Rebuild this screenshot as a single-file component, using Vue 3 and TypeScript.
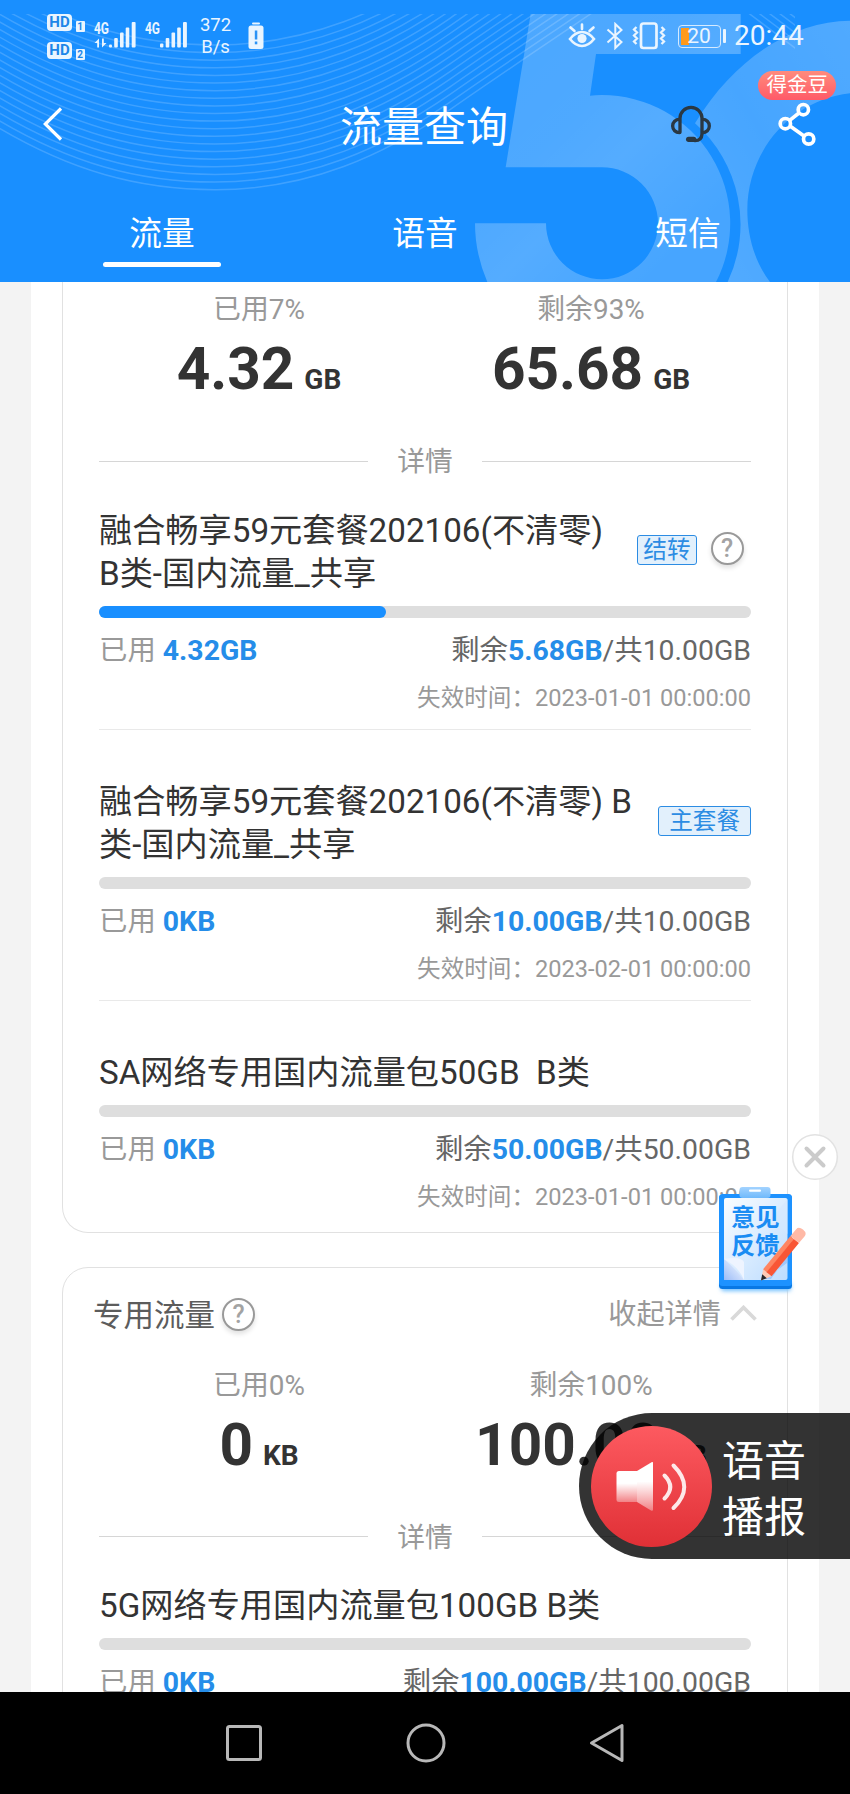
<script setup lang="ts">
interface Plan {
  title: string
  tag?: string
  help?: boolean
  percent: number
  used: string
  left: string
  total: string
  expire: string
}
interface Stat {
  label: string
  value: string
  unit: string
}
interface Group {
  name?: string
  stats: Stat[]
  plans: Plan[]
}

const tabs: string[] = ['流量', '语音', '短信']
const activeTab = 0

const groups: Group[] = [
  {
    stats: [
      { label: '已用7%', value: '4.32', unit: 'GB' },
      { label: '剩余93%', value: '65.68', unit: 'GB' },
    ],
    plans: [
      {
        title: '融合畅享59元套餐202106(不清零)\nB类-国内流量_共享',
        tag: '结转',
        help: true,
        percent: 44,
        used: '4.32GB',
        left: '5.68GB',
        total: '10.00GB',
        expire: '2023-01-01 00:00:00',
      },
      {
        title: '融合畅享59元套餐202106(不清零) B\n类-国内流量_共享',
        tag: '主套餐',
        percent: 0,
        used: '0KB',
        left: '10.00GB',
        total: '10.00GB',
        expire: '2023-02-01 00:00:00',
      },
      {
        title: 'SA网络专用国内流量包50GB  B类',
        percent: 0,
        used: '0KB',
        left: '50.00GB',
        total: '50.00GB',
        expire: '2023-01-01 00:00:00',
      },
    ],
  },
  {
    name: '专用流量',
    stats: [
      { label: '已用0%', value: '0', unit: 'KB' },
      { label: '剩余100%', value: '100.00', unit: 'GB' },
    ],
    plans: [
      {
        title: '5G网络专用国内流量包100GB B类',
        percent: 0,
        used: '0KB',
        left: '100.00GB',
        total: '100.00GB',
        expire: '2023-01-01 00:00:00',
      },
    ],
  },
]

const waves: number[] = Array.from({ length: 20 }, (_, i) => 189.7 - i * 7.62)
</script>

<template>
  <div class="phone">
    <header class="header">
      <svg class="header-art" width="850" height="282" viewBox="0 0 850 282">
        <defs>
          <clipPath id="waveClip"><rect x="0" y="14" width="795" height="268" /></clipPath>
          <linearGradient id="five" gradientUnits="userSpaceOnUse" x1="250" y1="150" x2="800" y2="700">
            <stop offset="0" stop-color="#fff" stop-opacity=".22" />
            <stop offset=".35" stop-color="#fff" stop-opacity=".23" />
            <stop offset=".6" stop-color="#fff" stop-opacity=".26" />
            <stop offset="1" stop-color="#fff" stop-opacity=".2" />
          </linearGradient>
          <linearGradient id="gee" x1="1" y1="0" x2="0" y2="1">
            <stop offset="0" stop-color="#fff" stop-opacity=".24" />
            <stop offset=".5" stop-color="#fff" stop-opacity=".2" />
            <stop offset="1" stop-color="#fff" stop-opacity=".26" />
          </linearGradient>
        </defs>
        <g clip-path="url(#waveClip)" fill="none" stroke="#fff" stroke-opacity=".17" stroke-width="1.5">
          <path
            v-for="y in waves"
            :key="y"
            :transform="`translate(0 ${y})`"
            d="M-10 -67C70 -18 140 0 215 0C310 0 385 -35 450 -80C500 -115 560 -155 591 -176C640 -210 700 -215 740 -183L800 -138"
          />
        </g>
        <g transform="translate(425 0) scale(.33333)">
          <path
            fill="url(#five)"
            d="M317 42H947V162H513L495 287Q512 285 530 285A385 385 0 0 1 873 846H187Q150 760 150 670H363A168 168 0 1 0 530 502H242Z"
          />
          <path
            fill="url(#gee)"
            d="M1275 62C1110 62 930 170 810 370A405 405 0 0 1 908 846H1035C985 780 967 700 967 630C967 450 1100 300 1275 280Z"
          />
        </g>
      </svg>

      <div class="status">
        <div class="status-left">
          <div class="hd-stack">
            <div v-for="n in 2" :key="n" class="hd">
              <span class="hd-box">HD</span><span class="hd-num">{{ n }}</span>
            </div>
          </div>
          <svg class="signal" width="44" height="30" viewBox="0 0 44 30" fill="#eaf5ff">
            <text x="0" y="14.500" class="g4" textLength="15" lengthAdjust="spacingAndGlyphs">4G</text>
            <path d="M0.500 24l4.500-4.500V28.500H3.200v-4.500zM12.500 24l-4.500 4.500V19.500h1.800v4.500z" />
            <rect x="15" y="25.500" width="3" height="3" rx="1" />
            <rect x="20.200" y="19" width="3.600" height="9.500" rx="1" />
            <rect x="26" y="13.500" width="3.600" height="15" rx="1" />
            <rect x="31.700" y="8.500" width="3.600" height="20" rx="1" />
            <rect x="37.700" y="3" width="3.900" height="25.500" rx="1" />
          </svg>
          <svg class="signal second" width="44" height="30" viewBox="0 0 44 30" fill="#eaf5ff">
            <text x="0" y="14.500" class="g4" textLength="15" lengthAdjust="spacingAndGlyphs">4G</text>
            <rect x="15" y="24.500" width="3.400" height="4" rx="1" />
            <rect x="20.700" y="19" width="3.600" height="9.500" rx="1" />
            <rect x="26.500" y="13.500" width="3.600" height="15" rx="1" />
            <rect x="32.200" y="8.500" width="3.600" height="20" rx="1" />
            <rect x="38" y="3" width="3.900" height="25.500" rx="1" />
          </svg>
          <div class="speed"><span>372</span><span>B/s</span></div>
          <svg class="alert" width="16" height="28" viewBox="0 0 16 28">
            <rect x="4" y="0.500" width="8" height="2" rx="1" fill="#eaf5ff" />
            <rect x="0.500" y="3.500" width="15" height="23.500" rx="2.500" fill="#eaf5ff" />
            <rect x="6.800" y="8.500" width="2.500" height="9" fill="#2b93f5" />
            <rect x="6.800" y="19.500" width="2.500" height="2.800" fill="#2b93f5" />
          </svg>
        </div>
        <div class="status-right">
          <svg width="28" height="26" viewBox="0 0 28 26" fill="none" stroke="#eaf5ff" stroke-width="2.600" stroke-linecap="round">
            <path d="M2 16Q7.500 9 14 9T26 16Q20.500 23 14 23T2 16Z" />
            <path d="M14 6V1.500M6.500 8L2.500 4.500M21.500 8l4-3.500" />
            <circle cx="14" cy="15.500" r="4.600" fill="#eaf5ff" stroke="none" />
          </svg>
          <svg class="bt" width="18" height="28" viewBox="0 0 18 28" fill="none" stroke="#eaf5ff" stroke-width="2">
            <path d="M1.500 7.500L15.500 20L9.300 26V2L15.500 8L1.500 20.500" />
          </svg>
          <svg class="vib" width="34" height="28" viewBox="0 0 34 28" fill="none" stroke="#eaf5ff">
            <rect x="9" y="1.500" width="15.500" height="24.500" rx="2.500" stroke-width="2.700" />
            <path d="M4.500 5L2 7.500L5 10.500L2 13.500L5 16.500L2 19.500L4.500 22M29.500 5L32 7.500L29 10.500L32 13.500L29 16.500L32 19.500L29.500 22" stroke-width="2.300" />
          </svg>
          <div class="battery"><span>20</span></div>
          <i class="nub"></i>
          <span class="clock">20:44</span>
        </div>
      </div>

      <div class="titlebar">
        <svg class="back" width="24" height="38" viewBox="0 0 24 38" fill="none" stroke="#fff" stroke-width="3.200">
          <path d="M20 3.500L4.300 19L20 34.500" />
        </svg>
        <h1>流量查询</h1>
        <div class="actions">
          <svg width="43.330" height="43.330" viewBox="734 309 130 130" fill="none" stroke="#2a3843" stroke-width="10" stroke-linecap="round">
            <path d="M767 400V358A33 33 0 0 1 833 358V405Q832 425 812 425" />
            <path d="M793 421H808" stroke-width="16" />
            <path d="M765 361A20 20 0 0 0 765 401M835 361A20 20 0 0 1 835 401" />
          </svg>
          <div class="share">
            <svg width="43.330" height="46.670" viewBox="1052 302 130 140" fill="none" stroke="#fff" stroke-width="11">
              <path d="M1093 360L1121 338M1095 378L1135 406" />
              <circle cx="1134" cy="328" r="15.500" />
              <circle cx="1080" cy="370" r="15.500" />
              <circle cx="1150" cy="416" r="15.500" />
            </svg>
            <span class="bean">得金豆</span>
          </div>
        </div>
      </div>

      <nav class="tabs">
        <div v-for="(t, i) in tabs" :key="t" class="tab" :class="{ active: i === activeTab }">{{ t }}</div>
      </nav>
    </header>

    <main class="content">
      <div class="sheet">
        <section v-for="(g, gi) in groups" :key="gi" class="card" :class="{ open: !g.name }">
          <div v-if="g.name" class="card-head">
            <span class="card-name">{{ g.name }}</span>
            <span class="help">?</span>
            <span class="fold">收起详情</span>
            <svg class="chev" width="27" height="16" viewBox="0 0 27 16" fill="none" stroke="#d9d9d9" stroke-width="3.700">
              <path d="M1.500 14.500L13.500 2.500L25.500 14.500" />
            </svg>
          </div>
          <div class="stats">
            <div v-for="s in g.stats" :key="s.label" class="stat">
              <div class="stat-label">{{ s.label }}</div>
              <div class="stat-value">{{ s.value }}<small>{{ s.unit }}</small></div>
            </div>
          </div>
          <div class="divider"><span>详情</span></div>
          <div class="plans">
            <article v-for="p in g.plans" :key="p.title" class="plan">
              <div class="plan-top">
                <h2>{{ p.title }}</h2>
                <div v-if="p.tag" class="marks">
                  <span class="tag" :class="{ narrow: p.help }">{{ p.tag }}</span>
                  <span v-if="p.help" class="help">?</span>
                </div>
              </div>
              <div class="bar"><i :style="{ width: p.percent + '%' }"></i></div>
              <div class="usage">
                <span class="used">已用 <b>{{ p.used }}</b></span>
                <span>剩余<b>{{ p.left }}</b>/共{{ p.total }}</span>
              </div>
              <div class="expire">失效时间：{{ p.expire }}</div>
            </article>
          </div>
        </section>
      </div>
    </main>

    <footer class="navbar">
      <svg width="38" height="40" viewBox="0 0 38 40" fill="none" stroke="#b8b8b8" stroke-width="3">
        <rect x="2.500" y="3.500" width="33" height="33" rx="2" />
      </svg>
      <svg width="40" height="40" viewBox="0 0 40 40" fill="none" stroke="#b8b8b8" stroke-width="3">
        <circle cx="20" cy="20" r="18" />
      </svg>
      <svg width="38" height="40" viewBox="0 0 38 40" fill="none" stroke="#b8b8b8" stroke-width="3" stroke-linejoin="round">
        <path d="M3.500 20L34 2.500V37.500Z" />
      </svg>
    </footer>

    <svg class="close" width="48" height="48" viewBox="0 0 48 48">
      <circle cx="24" cy="24" r="22.300" fill="#fff" stroke="#e2e2e2" stroke-width="1.500" />
      <path d="M15.500 15.500L32.500 32.500M32.500 15.500L15.500 32.500" stroke="#cbcbcb" stroke-width="4" stroke-linecap="round" />
    </svg>

    <div class="feedback">
      <svg width="92" height="112" viewBox="0 0 92 112">
        <defs>
          <linearGradient id="paper" x1="0" y1="0" x2="1" y2="1">
            <stop offset="0" stop-color="#fafdff" />
            <stop offset="1" stop-color="#bcdcff" />
          </linearGradient>
          <linearGradient id="clip" x1="0" y1="0" x2="0" y2="1">
            <stop offset="0" stop-color="#a3d3ff" />
            <stop offset="1" stop-color="#6fb9fb" />
          </linearGradient>
          <linearGradient id="curl" x1="1" y1="0" x2="0" y2="1">
            <stop offset="0" stop-color="#fff" />
            <stop offset="1" stop-color="#9bbcf8" />
          </linearGradient>
          <filter id="soft" x="-20%" y="-100%" width="140%" height="300%"><feGaussianBlur stdDeviation="2" /></filter>
        </defs>
        <rect x="6" y="98" width="70" height="9" rx="3" fill="#6fc0ff" filter="url(#soft)" />
        <rect x="4" y="11" width="73" height="94" rx="3.500" fill="#0878e4" />
        <rect x="4" y="10" width="73" height="92" rx="3.500" fill="#1d92ff" />
        <rect x="9" y="14" width="63.500" height="82" rx="2" fill="url(#paper)" />
        <path d="M72.500 15L56 35L72.500 50Z" fill="#d4e7ff" opacity=".6" />
        <path d="M9 75Q20 84 29 96H9Z" fill="url(#curl)" />
        <path d="M9 75Q26 72 29 78V96Q24 83 9 75Z" fill="#eef4ff" />
        <rect x="24.500" y="3" width="31" height="11" rx="3" fill="url(#clip)" />
        <rect x="34" y="5.500" width="12" height="2.200" rx="1" fill="#fff" />
      </svg>
      <span class="feedback-text">意见<br />反馈</span>
      <svg class="pencil" width="92" height="112" viewBox="0 0 92 112">
        <path d="M50 95L72 79L72.500 72L56 95Z" fill="#85b8fb" opacity=".6" />
        <g transform="translate(46 96.500) rotate(-50.500)">
          <path d="M0 0L10 -5.500V5.500Z" fill="#ffc9b5" />
          <path d="M0 0L5.500 -3V3Z" fill="#26262b" />
          <rect x="10" y="-5.500" width="43" height="5" fill="#ff8562" />
          <rect x="10" y="-1" width="43" height="6.500" fill="#f95635" />
          <path d="M53 -5.500H62Q66 -5.500 66 0T62 5.500H53Z" fill="#ffb9a6" />
        </g>
      </svg>
    </div>

    <div class="voice">
      <svg width="121" height="121" viewBox="0 0 121 121">
        <defs>
          <linearGradient id="red" x1="0" y1="0" x2="0" y2="1">
            <stop offset="0" stop-color="#fd5a60" />
            <stop offset="1" stop-color="#e03036" />
          </linearGradient>
          <linearGradient id="horn" x1="0" y1="0" x2="0" y2="1">
            <stop offset=".4" stop-color="#fff" />
            <stop offset="1" stop-color="#fff" stop-opacity=".35" />
          </linearGradient>
        </defs>
        <circle cx="60.500" cy="60.500" r="60.500" fill="url(#red)" />
        <path d="M28 45H46V76H28Q25.500 76 25.500 73.500V47.500Q25.500 45 28 45Z" fill="url(#horn)" />
        <path d="M46 45L61 36Q62 35.500 62 37V83.500Q62 85.500 60 84.500L46 76Z" fill="url(#horn)" />
        <path d="M73.500 49.500Q85 61 73.500 72.500M82.500 39.500Q104 61 82.500 82" fill="none" stroke="#fff" stroke-opacity=".88" stroke-width="4" stroke-linecap="round" />
      </svg>
      <span class="voice-text">语音<br />播报</span>
    </div>
  </div>
</template>

<style>
body {
  margin: 0;
  background: #f3f3f3;
}
</style>

<style scoped>
.phone {
  position: relative;
  display: flex;
  flex-direction: column;
  width: 850px;
  height: 1794px;
  overflow: hidden;
  background: #f3f3f3;
  color: #333;
  font-family: Roboto, 'Noto Sans CJK SC', sans-serif;
}
svg {
  display: block;
  flex: none;
}

/* header */
.header {
  position: relative;
  flex: none;
  height: 282px;
  background: #198fff;
  color: #fff;
}
.header-art {
  position: absolute;
  left: 0;
  top: 0;
}
.status {
  position: relative;
  display: flex;
  justify-content: space-between;
  height: 70px;
  box-sizing: border-box;
  padding: 0 46px 0 47px;
  color: #eaf5ff;
}
.status-left {
  display: flex;
  align-items: flex-start;
}
.hd-stack {
  display: flex;
  flex-direction: column;
  gap: 11.500px;
  padding-top: 13.500px;
}
.hd {
  display: flex;
  align-items: flex-end;
  gap: 3.500px;
  height: 17px;
}
.hd-box {
  width: 25px;
  height: 17px;
  border-radius: 4px;
  background: #eaf5ff;
  color: #1d86e8;
  font: 700 15px/17px Roboto, sans-serif;
  text-align: center;
}
.hd-num {
  width: 9px;
  height: 11px;
  border-radius: 1px;
  background: #eaf5ff;
  color: #1d86e8;
  font: 700 10px/11px Roboto, sans-serif;
  text-align: center;
  position: relative;
  top: 1px;
}
.signal {
  margin: 19px 0 0 9px;
}
.signal.second {
  margin-left: 7.500px;
}
.g4 {
  font: 700 16px Roboto, sans-serif;
}
.speed {
  display: flex;
  flex-direction: column;
  width: 36px;
  margin: 14px 0 0 8.500px;
  font-size: 18.500px;
  line-height: 22px;
  text-align: center;
}
.alert {
  margin: 22px 0 0 14.500px;
}
.status-right {
  display: flex;
  align-items: center;
  height: 72px;
}
.bt {
  margin-left: 10px;
}
.vib {
  margin-left: 8px;
}
.battery {
  position: relative;
  width: 43px;
  height: 23px;
  margin-left: 11.500px;
  box-sizing: border-box;
  border: 1.500px solid #d5eaff;
  border-radius: 4px;
  font-size: 21px;
  line-height: 20px;
  text-align: center;
  background: linear-gradient(#ff9a1c, #ff9a1c) 2px 2px / 8px 17px no-repeat;
}
.nub {
  width: 3px;
  height: 14px;
  margin-left: 2px;
  border-radius: 1px;
  background: #eaf5ff;
}
.clock {
  width: 70px;
  margin-left: 8.500px;
  font-size: 28px;
  line-height: 36px;
  white-space: nowrap;
}
.titlebar {
  position: relative;
  display: grid;
  grid-template-columns: 1fr auto 1fr;
  align-items: center;
  height: 108px;
}
.back {
  margin-left: 41px;
}
h1 {
  margin: 7px 2px 0 0;
  font-size: 42px;
  line-height: 60px;
  font-weight: 400;
}
.actions {
  display: flex;
  justify-content: flex-end;
  align-items: center;
  gap: 63px;
  padding-right: 31px;
}
.share {
  position: relative;
}
.bean {
  position: absolute;
  left: -17.500px;
  top: -29.500px;
  width: 78px;
  height: 28.500px;
  border-radius: 15px;
  background: linear-gradient(#ff8b7c, #ff5a68);
  font-size: 20.500px;
  line-height: 29px;
  text-align: center;
  white-space: nowrap;
}
.tabs {
  position: relative;
  display: flex;
  justify-content: center;
  height: 104px;
}
.tab {
  display: flex;
  flex-direction: column;
  align-items: center;
  width: 263px;
  padding-top: 33px;
  font-size: 32.700px;
  line-height: 46px;
}
.tab.active::after {
  content: '';
  width: 118px;
  height: 5px;
  margin-top: 5px;
  border-radius: 3px;
  background: #fff;
}

/* content */
.content {
  flex: 1;
  min-height: 0;
  overflow: hidden;
  display: flex;
  justify-content: center;
}
.sheet {
  width: 788px;
  min-height: 100%;
  box-sizing: border-box;
  padding: 0 31px;
  background: #fff;
}
.card {
  box-sizing: border-box;
  border: 1.500px solid #e1e1e1;
  border-radius: 26px;
  margin-bottom: 34px;
}
.card.open {
  border-top: 0;
  border-radius: 0 0 26px 26px;
}
.card-head {
  display: flex;
  align-items: center;
  height: 90px;
  padding: 0 30px;
}
.card-name {
  font-size: 30.500px;
  line-height: 44px;
  color: #5c5c5c;
  margin-top: 7px;
}
.help {
  width: 33px;
  height: 33px;
  box-sizing: border-box;
  border: 2px solid #999;
  border-radius: 50%;
  color: #a3a3a3;
  font-size: 25px;
  font-weight: 500;
  line-height: 30px;
  text-align: center;
  box-shadow: 0 3px 5px rgba(0, 0, 0, 0.12);
  background: #fff;
}
.card-head .help {
  margin: 3px 0 0 7px;
}
.fold {
  margin: 5px 9px 0 auto;
  font-size: 28.200px;
  line-height: 34px;
  color: #999;
}
.stats {
  display: flex;
  justify-content: center;
  padding: 14px 30px 0;
}
.stat {
  flex: 1;
  text-align: center;
}
.stat-label {
  font-size: 27.900px;
  line-height: 28px;
  color: #999;
}
.stat-value {
  height: 60px;
  margin-top: 15px;
  font-size: 58.500px;
  line-height: 60px;
  font-weight: 700;
}
.stat-value small {
  margin-left: 10px;
  font-size: 28px;
  line-height: 1;
}
.divider {
  display: flex;
  align-items: center;
  gap: 29px;
  margin: 48px 36px 0;
  height: 30px;
  color: #999;
  font-size: 27.800px;
  line-height: 30px;
}
.divider::before,
.divider::after {
  content: '';
  flex: 1;
  height: 1px;
  margin-top: -2px;
  background: #d6d6d6;
}
.plans {
  padding: 0 36px;
}
.plan {
  padding: 50px 0 17px;
  border-bottom: 1px solid #e9e9e9;
}
.plan:first-child {
  padding-top: 31.500px;
}
.plan:last-child {
  padding-bottom: 21px;
  border-bottom: 0;
}
.plan-top {
  display: flex;
  justify-content: space-between;
  align-items: center;
}
h2 {
  margin: 0;
  font-size: 33.200px;
  line-height: 43px;
  font-weight: 400;
  white-space: pre;
}
.marks {
  display: flex;
  align-items: center;
  margin-top: -3px;
}
.tag {
  box-sizing: border-box;
  height: 30px;
  padding: 0 10px;
  border: 1px solid #2c8ce3;
  border-radius: 3px;
  background: #e2f0fc;
  color: #2c8ce3;
  font-size: 23.600px;
  line-height: 28px;
}
.tag.narrow {
  padding: 0 5px;
}
.marks .help {
  margin: 0 7.500px 3px 14px;
}
.bar {
  height: 12px;
  margin-top: 11px;
  border-radius: 6px;
  background: #dedede;
}
.bar i {
  display: block;
  height: 12px;
  border-radius: 6px;
  background: #198fff;
}
.usage {
  display: flex;
  justify-content: space-between;
  margin-top: 16px;
  font-size: 28.400px;
  line-height: 34px;
  color: #666;
}
.usage b {
  color: #258de9;
}
.used {
  color: #999;
}
.expire {
  margin-top: 16px;
  font-size: 23.600px;
  line-height: 28px;
  text-align: right;
  color: #999;
}

/* system navigation */
.navbar {
  flex: none;
  display: flex;
  justify-content: center;
  align-items: center;
  gap: 143px;
  height: 102px;
  background: #000;
}
.navbar svg:last-child {
  margin-left: -1px;
}

/* floating controls */
.close {
  position: absolute;
  left: 791px;
  top: 1133px;
}
.feedback {
  position: absolute;
  left: 715px;
  top: 1184px;
}
.feedback-text {
  position: absolute;
  left: 16px;
  top: 20px;
  font-size: 24.300px;
  line-height: 27.500px;
  font-weight: 700;
  color: #1a8cf3;
  white-space: nowrap;
}
.pencil {
  position: absolute;
  left: 0;
  top: 0;
}
.voice {
  position: absolute;
  right: 0;
  top: 1413px;
  display: flex;
  align-items: center;
  gap: 10px;
  width: 271.500px;
  height: 146px;
  box-sizing: border-box;
  padding-left: 12.500px;
  border-radius: 73px 0 0 73px;
  background: rgba(0, 0, 0, 0.8);
  color: #fff;
  font-size: 42px;
  line-height: 56.500px;
}
.voice-text {
  padding-top: 8px;
}
</style>
